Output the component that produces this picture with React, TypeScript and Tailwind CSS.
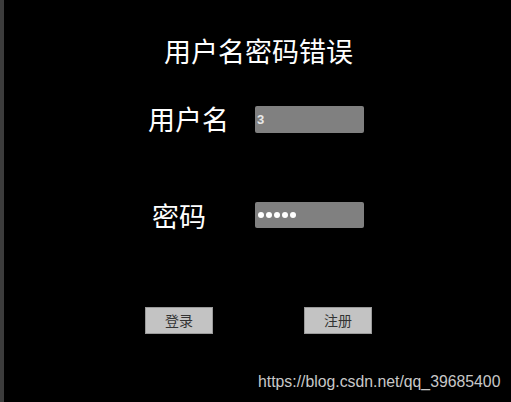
import React from "react";

const cjk = { fontFamily: '"Noto Sans CJK SC", "Noto Sans", sans-serif' };

function Dots() {
  return (
    <div className="flex items-center gap-[2px]" aria-label="password">
      <span className="block w-[6px] h-[6px] rounded-full bg-white" />
      <span className="block w-[6px] h-[6px] rounded-full bg-white" />
      <span className="block w-[6px] h-[6px] rounded-full bg-white" />
      <span className="block w-[6px] h-[6px] rounded-full bg-white" />
      <span className="block w-[6px] h-[6px] rounded-full bg-white" />
    </div>
  );
}

export default function App() {
  return (
    <div className="w-[511px] h-[402px] bg-black flex overflow-hidden" style={cjk}>
      <div className="w-[4px] h-full bg-[#3c3c3c] shrink-0" />
      <div className="flex-1 flex flex-col">
        <div className="mt-[37px] ml-[160px] text-[27px] leading-[27px] text-white">用户名密码错误</div>

        <div className="mt-[41px] flex items-start">
          <div className="ml-[144px] w-[107px] text-[27px] leading-[27px] text-white">用户名</div>
          <div className="mt-[1px] w-[109px] h-[27px] rounded-[2px] bg-[#808080] flex items-center pl-[2px]">
            <span className="text-[13px] font-bold text-[#e8e8e8]" style={{ fontFamily: '"Liberation Sans", sans-serif' }}>3</span>
          </div>
        </div>

        <div className="mt-[69px] flex items-start">
          <div className="ml-[148px] w-[103px] text-[27px] leading-[27px] text-white">密码</div>
          <div className="w-[109px] h-[26px] rounded-[2px] bg-[#808080] flex items-center pl-[3px]">
            <Dots />
          </div>
        </div>

        <div className="mt-[78px] flex">
          <div className="ml-[141px] w-[68px] h-[27px] bg-[#c3c3c3] border border-[#9a9a9a] flex items-center justify-center text-[14px] text-[#333]">登录</div>
          <div className="ml-[91px] w-[68px] h-[27px] bg-[#c3c3c3] border border-[#9a9a9a] flex items-center justify-center text-[14px] text-[#333]">注册</div>
        </div>

        <div className="mt-[39px] ml-[254px] text-[15.8px] leading-[18px] text-[#c8c8c8]" style={{ fontFamily: '"Liberation Sans", Arial, sans-serif' }}>
          https://blog.csdn.net/qq_39685400
        </div>
      </div>
    </div>
  );
}
